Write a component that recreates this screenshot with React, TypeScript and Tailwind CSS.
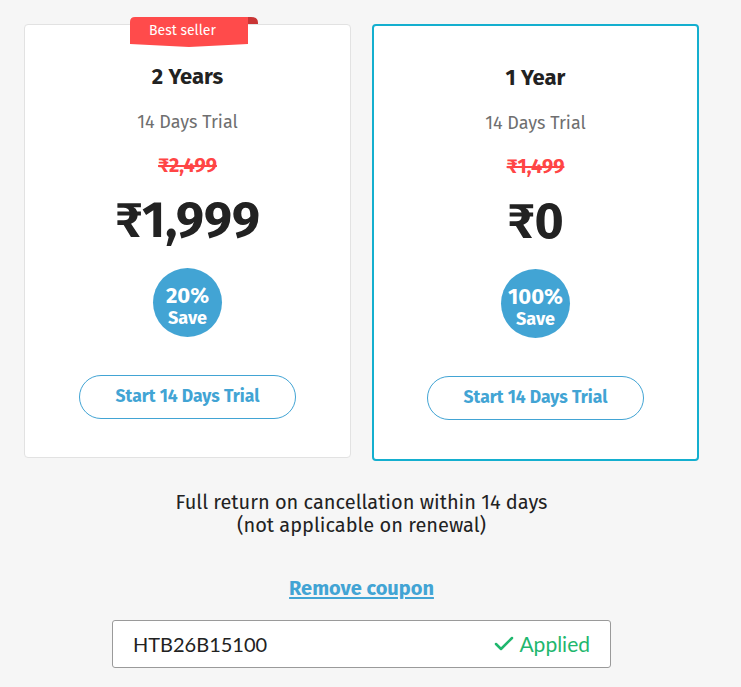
import React from 'react';
import { Check } from 'lucide-react';

type Plan = {
  title: string;
  oldPrice: string;
  price: string;
  save: string;
  bestSeller?: boolean;
  selected?: boolean;
};

const plans: Plan[] = [
  { title: '2 Years', oldPrice: '₹2,499', price: '₹1,999', save: '20%', bestSeller: true },
  { title: '1 Year', oldPrice: '₹1,499', price: '₹0', save: '100%', selected: true },
];

function BestSellerBadge() {
  return (
    <div className="absolute left-[105px] top-[-8px] w-[128px] h-[30px]">
      <svg width="128" height="30" viewBox="0 0 128 30" className="absolute inset-0">
        <path d="M118 0 H121 Q128 0 128 6 V7 H118 Z" fill="#c93535" />
        <path d="M5 0 H118 V27 L59 30 L0 27 V5 Q0 0 5 0 Z" fill="#ff4b4b" />
      </svg>
      <span className="absolute left-[19px] top-[4px] text-[14px] leading-[20px] text-white">
        Best seller
      </span>
    </div>
  );
}

function PlanCard({ plan }: { plan: Plan }) {
  return (
    <div
      className={
        plan.selected
          ? 'relative w-[327px] bg-white rounded-[4px] border-2 border-[#14afcf] pt-[38px] pb-[39px] flex flex-col items-center'
          : 'relative w-[327px] bg-white rounded-[4px] border border-[#e2e2e2] pt-[38px] pb-[38px] flex flex-col items-center'
      }
    >
      {plan.bestSeller && <BestSellerBadge />}
      <div className="h-[28px] leading-[28px] text-[22px] font-bold text-[#222]">{plan.title}</div>
      <div className="mt-[19px] h-[24px] leading-[24px] text-[18px] text-[#6f6f6f]">14 Days Trial</div>
      <div className="mt-[19px] h-[24px] leading-[24px] text-[20px] font-bold text-[#ff4545] line-through">
        {plan.oldPrice}
      </div>
      <div className="mt-[15px] h-[56px] leading-[56px] text-[50px] font-bold text-[#222]">
        {plan.price}
      </div>
      <div className="mt-[20px] w-[69px] h-[69px] rounded-full bg-[#42a4d4] flex flex-col items-center justify-center pt-[7px] text-white font-bold">
        <span className="text-[22px] leading-[20px]">{plan.save}</span>
        <span className="mt-[3px] text-[18px] leading-[18px]">Save</span>
      </div>
      <button className="mt-[38px] w-[217px] h-[44px] rounded-full border border-[#42a4d4] text-[#42a4d4] text-[17.5px] font-bold">
        Start 14 Days Trial
      </button>
    </div>
  );
}

export default function App() {
  return (
    <div
      className="min-h-[687px] bg-[#f6f6f6] pl-[24px] pt-[24px] pb-[19px]"
      style={{ fontFamily: '"Fira Sans", "Open Sans", "Noto Sans", sans-serif' }}
    >
      <div className="w-[675px] flex flex-col items-center">
        <div className="w-full flex items-start justify-between">
          {plans.map((p) => (
            <PlanCard key={p.title} plan={p} />
          ))}
        </div>

        <p className="mt-[30px] text-center text-[20px] leading-[23px] text-[#222]">
          Full return on cancellation within 14 days
          <br />
          (not applicable on renewal)
        </p>

        <a href="#" className="mt-[39px] h-[24px] leading-[24px] text-[20px] font-bold text-[#42a4d4] underline underline-offset-2">
          Remove coupon
        </a>

        <div
          className="mt-[20px] w-[499px] h-[48px] bg-white border border-[#9a9a9a] rounded-[3px] flex items-center justify-between pl-[20px] pr-[20px]"
          style={{ fontFamily: 'Lato, "Liberation Sans", sans-serif' }}
        >
          <span className="text-[20px] text-[#222]">HTB26B15100</span>
          <span className="flex items-center gap-[3px] text-[21px] text-[#1fb76e]">
            <Check size={24} strokeWidth={2.5} />
            Applied
          </span>
        </div>
      </div>
    </div>
  );
}
